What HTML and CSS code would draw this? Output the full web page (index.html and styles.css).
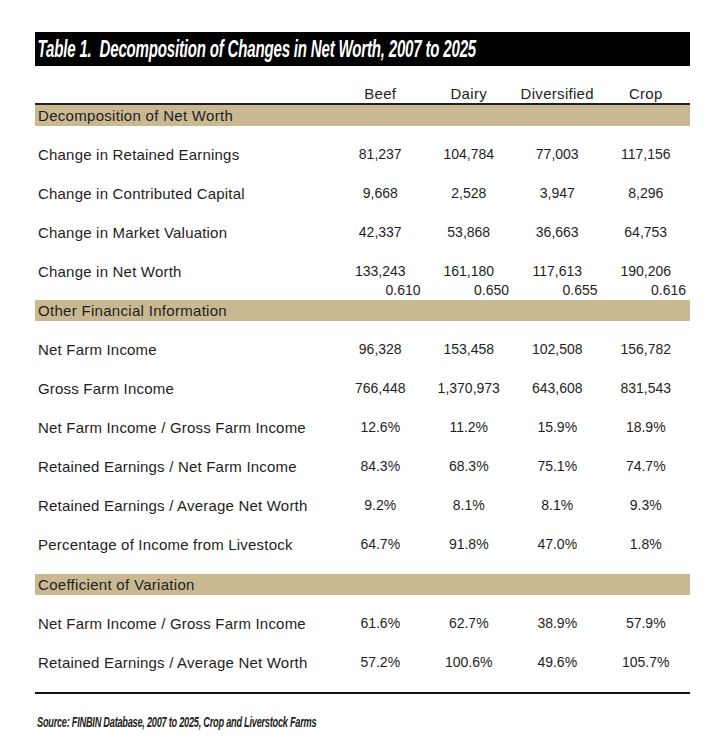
FILE: index.html
```
<!DOCTYPE html>
<html>
<head>
<meta charset="utf-8">
<link rel="stylesheet" href="styles.css">
</head>
<body>
<div class="page">
  <div class="title"><span class="title-text">Table 1.&nbsp; Decomposition of Changes in Net Worth, 2007 to 2025</span></div>
  <table class="grid">
    <colgroup>
      <col class="c-label"><col class="c-num"><col class="c-num"><col class="c-num"><col class="c-num">
    </colgroup>
    <thead>
      <tr class="head"><th></th><th>Beef</th><th>Dairy</th><th>Diversified</th><th>Crop</th></tr>
    </thead>
    <tbody>
      <tr class="band"><td colspan="5">Decomposition of Net Worth</td></tr>
      <tr class="row first"><td>Change in Retained Earnings</td><td>81,237</td><td>104,784</td><td>77,003</td><td>117,156</td></tr>
      <tr class="row"><td>Change in Contributed Capital</td><td>9,668</td><td>2,528</td><td>3,947</td><td>8,296</td></tr>
      <tr class="row"><td>Change in Market Valuation</td><td>42,337</td><td>53,868</td><td>36,663</td><td>64,753</td></tr>
      <tr class="row double"><td><div>Change in Net Worth</div></td>
        <td><div>133,243</div><div class="sub">0.610</div></td>
        <td><div>161,180</div><div class="sub">0.650</div></td>
        <td><div>117,613</div><div class="sub">0.655</div></td>
        <td><div>190,206</div><div class="sub">0.616</div></td></tr>
      <tr class="band"><td colspan="5">Other Financial Information</td></tr>
      <tr class="row first"><td>Net Farm Income</td><td>96,328</td><td>153,458</td><td>102,508</td><td>156,782</td></tr>
      <tr class="row"><td>Gross Farm Income</td><td>766,448</td><td>1,370,973</td><td>643,608</td><td>831,543</td></tr>
      <tr class="row"><td>Net Farm Income / Gross Farm Income</td><td>12.6%</td><td>11.2%</td><td>15.9%</td><td>18.9%</td></tr>
      <tr class="row"><td>Retained Earnings / Net Farm Income</td><td>84.3%</td><td>68.3%</td><td>75.1%</td><td>74.7%</td></tr>
      <tr class="row"><td>Retained Earnings / Average Net Worth</td><td>9.2%</td><td>8.1%</td><td>8.1%</td><td>9.3%</td></tr>
      <tr class="row last"><td>Percentage of Income from Livestock</td><td>64.7%</td><td>91.8%</td><td>47.0%</td><td>1.8%</td></tr>
      <tr class="band"><td colspan="5">Coefficient of Variation</td></tr>
      <tr class="row first"><td>Net Farm Income / Gross Farm Income</td><td>61.6%</td><td>62.7%</td><td>38.9%</td><td>57.9%</td></tr>
      <tr class="row end"><td>Retained Earnings / Average Net Worth</td><td>57.2%</td><td>100.6%</td><td>49.6%</td><td>105.7%</td></tr>
    </tbody>
  </table>
  <div class="source"><span class="source-text">Source: FINBIN Database, 2007 to 2025, Crop and Liverstock Farms</span></div>
</div>
</body>
</html>
```
FILE: styles.css
```
html, body {
  margin: 0;
  padding: 0;
  background: #fff;
}
body {
  font-family: "Liberation Sans", Arial, sans-serif;
  color: #1e1e1e;
}
.page {
  width: 655px;
  padding: 32px 0 0 35px;
}
.title {
  height: 34px;
  background: #000;
  color: #fff;
  overflow: hidden;
  white-space: nowrap;
}
.title-text {
  display: inline-block;
  font-family: "Liberation Sans Narrow", "Liberation Sans", sans-serif;
  font-weight: bold;
  font-style: italic;
  font-size: 23px;
  line-height: 34px;
  letter-spacing: -0.3px;
  padding-left: 4px;
  transform: scaleX(0.655);
  transform-origin: left center;
}
.grid {
  width: 655px;
  table-layout: fixed;
  border-collapse: collapse;
  border-bottom: 2px solid #111;
}
.c-label { width: 301px; }
.c-num { width: 88.5px; }
.grid th, .grid td {
  padding: 0;
}
.head th {
  height: 37px;
  vertical-align: bottom;
  font-weight: normal;
  font-size: 15px;
  line-height: 19px;
  letter-spacing: 0.3px;
  text-align: center;
  border-bottom: 2px solid #222;
}
.band td {
  background: #c9b993;
  height: 21px;
  line-height: 21px;
  padding: 0 3px;
  font-size: 15px;
  letter-spacing: 0.3px;
}
.row td {
  padding: 10px 0;
  line-height: 19px;
  font-size: 14px;
  text-align: center;
  vertical-align: top;
}
.row td:first-child {
  text-align: left;
  padding-left: 3px;
  font-size: 15px;
  letter-spacing: 0.2px;
}
.row.first td { padding-top: 19px; }
.row.last td { padding-bottom: 20px; }
.row.end td { padding-bottom: 20px; }
.row.double td { padding-bottom: 0; }
.row .sub {
  text-align: right;
  padding-right: 4px;
}
.source {
  margin-top: 19px;
  white-space: nowrap;
}
.source-text {
  display: inline-block;
  font-family: "Liberation Sans Narrow", "Liberation Sans", sans-serif;
  font-weight: bold;
  font-style: italic;
  font-size: 14px;
  letter-spacing: -0.4px;
  padding-left: 3px;
  transform: scaleX(0.66);
  transform-origin: left center;
}
```
